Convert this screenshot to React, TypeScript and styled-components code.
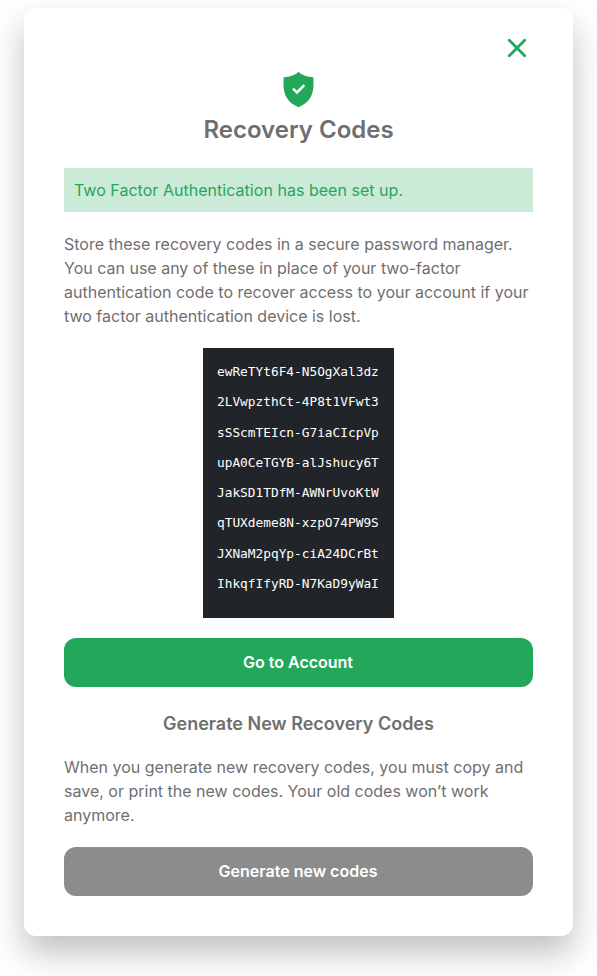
import React from "react";
import styled, { createGlobalStyle } from "styled-components";

const GlobalStyle = createGlobalStyle`
  * { box-sizing: border-box; }
  body {
    margin: 0;
    background: #fff;
    color: #6f6f6f;
    font-family: Inter, sans-serif;
    font-size: 16px;
    line-height: 24px;
  }
`;

const Page = styled.main`
  height: 976px;
  padding: 8px 24px 40px;
  overflow: hidden;
`;

const Card = styled.section`
  display: flex;
  flex-direction: column;
  width: 549px;
  height: 928px;
  padding: 30px 40px 40px;
  border-radius: 12px;
  background: #fff;
  box-shadow: 0 17px 34px rgba(0, 0, 0, 0.25);
`;

const CloseButton = styled.button`
  display: flex;
  align-self: flex-end;
  margin-right: 6px;
  padding: 0;
  border: 0;
  background: none;
  cursor: pointer;
`;

const Shield = styled.svg`
  align-self: center;
  flex: none;
  margin: 13px 1px 0 0;
`;

const Title = styled.h1`
  margin: 7px 0 0;
  font-size: 24px;
  font-weight: 600;
  line-height: 29px;
  text-align: center;
`;

const Notice = styled.div`
  margin-top: 24px;
  padding: 10px;
  background: #cbead8;
  color: #23a75b;
  letter-spacing: 0.03px;
`;

const Text = styled.p<{ $top: number }>`
  margin: ${({ $top }) => $top}px 0 0;
  white-space: nowrap;
`;

const Codes = styled.ul`
  align-self: center;
  flex: none;
  width: 191px;
  height: 270px;
  margin: 20px 0 0;
  padding: 9px 14px;
  list-style: none;
  background: #212529;
  color: #fff;
  font-family: "DejaVu Sans Mono", monospace;
  font-size: 12.8px;
  line-height: 30.3px;
`;

const Button = styled.button<{ $color: string }>`
  flex: none;
  height: 49px;
  margin: 20px 0 0;
  padding: 0 1px 2px 0;
  border: 0;
  border-radius: 12px;
  background: ${({ $color }) => $color};
  color: #fff;
  font: 600 16px/24px Inter, sans-serif;
  cursor: pointer;
`;

const Subtitle = styled.h2`
  margin: 24px 0 0;
  font-size: 18px;
  font-weight: 600;
  line-height: 26px;
  text-align: center;
`;

const codes = [
  "ewReTYt6F4-N5OgXal3dz",
  "2LVwpzthCt-4P8t1VFwt3",
  "sSScmTEIcn-G7iaCIcpVp",
  "upA0CeTGYB-alJshucy6T",
  "JakSD1TDfM-AWNrUvoKtW",
  "qTUXdeme8N-xzpO74PW9S",
  "JXNaM2pqYp-ciA24DCrBt",
  "IhkqfIfyRD-N7KaD9yWaI",
];

export default function App() {
  return (
    <Page>
      <GlobalStyle />
      <Card>
        <CloseButton aria-label="Close">
          <svg width="20" height="20" viewBox="0 0 20 20" fill="none" stroke="#23a75b" strokeWidth="2.8" strokeLinecap="round">
            <path d="M2.3 2.3 17.7 17.7M17.7 2.3 2.3 17.7" />
          </svg>
        </CloseButton>
        <Shield width="31" height="37" viewBox="0 0 31 37">
          <path
            fill="#23a75b"
            d="M15.5.7C18.500 4 24 5.800 30.300 6.200C31.200 18.500 30.500 30.300 15.500 36.200C.5 30.300-.2 18.500.7 6.200C7 5.800 12.500 4 15.500.7Z"
          />
          <path d="M10 17.700 14 21.400 21.300 14.100" fill="none" stroke="#fff" strokeWidth="2.500" />
        </Shield>
        <Title>Recovery Codes</Title>
        <Notice>Two Factor Authentication has been set up.</Notice>
        <Text $top={20}>
          Store these recovery codes in a secure password manager.<br />
          You can use any of these in place of your two-factor<br />
          authentication code to recover access to your account if your<br />
          two factor authentication device is lost.
        </Text>
        <Codes>
          {codes.map((code) => (
            <li key={code}>{code}</li>
          ))}
        </Codes>
        <Button $color="#23a75b">Go to Account</Button>
        <Subtitle>Generate New Recovery Codes</Subtitle>
        <Text $top={18}>
          When you generate new recovery codes, you must copy and<br />
          save, or print the new codes. Your old codes won’t work<br />
          anymore.
        </Text>
        <Button $color="#8c8c8c">Generate new codes</Button>
      </Card>
    </Page>
  );
}
